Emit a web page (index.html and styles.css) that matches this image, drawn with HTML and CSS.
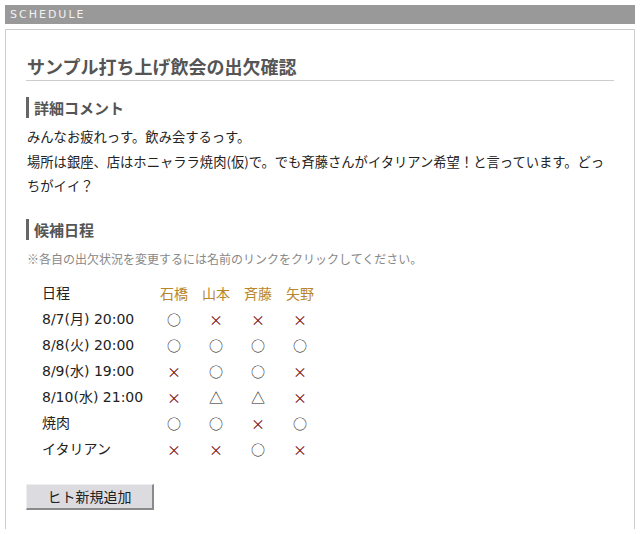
FILE: index.html
```html
<!DOCTYPE html>
<html lang="ja">
<head>
<meta charset="utf-8">
<title>SCHEDULE</title>
<link rel="stylesheet" href="styles.css">
</head>
<body>
<div class="header">SCHEDULE</div>
<div class="box">
  <h1 class="title">サンプル打ち上げ飲会の出欠確認</h1>
  <h2 class="sub">詳細コメント</h2>
  <p class="comment">みんなお疲れっす。飲み会するっす。<br>場所は銀座、店はホニャララ焼肉(仮)で。でも斉藤さんがイタリアン希望！と言っています。どっちがイイ？</p>
  <h2 class="sub sub2">候補日程</h2>
  <p class="note">※各自の出欠状況を変更するには名前のリンクをクリックしてください。</p>
  <table class="sched">
    <tr><th class="lbl">日程</th><th>石橋</th><th>山本</th><th>斉藤</th><th>矢野</th></tr>
    <tr><td class="lbl">8/7(月) 20:00</td><td class="o">○</td><td class="x">×</td><td class="x">×</td><td class="x">×</td></tr>
    <tr><td class="lbl">8/8(火) 20:00</td><td class="o">○</td><td class="o">○</td><td class="o">○</td><td class="o">○</td></tr>
    <tr><td class="lbl">8/9(水) 19:00</td><td class="x">×</td><td class="o">○</td><td class="o">○</td><td class="x">×</td></tr>
    <tr><td class="lbl">8/10(水) 21:00</td><td class="x">×</td><td class="o">△</td><td class="o">△</td><td class="x">×</td></tr>
    <tr><td class="lbl">焼肉</td><td class="o">○</td><td class="o">○</td><td class="x">×</td><td class="o">○</td></tr>
    <tr><td class="lbl">イタリアン</td><td class="x">×</td><td class="x">×</td><td class="o">○</td><td class="x">×</td></tr>
  </table>
  <button class="add" type="button">ヒト新規追加</button>
</div>
</body>
</html>
```

FILE: styles.css
```css
html, body {
  margin: 0;
  background: #fff;
}
body {
  padding: 5px 6px 0 5px;
  font-family: "Noto Sans CJK JP", "Noto Sans", sans-serif;
  color: #222;
}
.header {
  height: 19px;
  line-height: 19px;
  background: #999;
  color: #f2f2f2;
  font-family: "DejaVu Sans", sans-serif;
  font-size: 11px;
  letter-spacing: 2px;
  padding-left: 5px;
}
.box {
  margin-top: 5px;
  border: 1px solid #ccc;
  border-bottom: none;
  padding: 24px 20px 30px 20px;
  height: 500px;
  box-sizing: border-box;
}
.title {
  margin: 0;
  font-size: 18px;
  line-height: 24px;
  font-weight: bold;
  color: #555;
  padding: 0 0 2px 1px;
  border-bottom: 1px solid #ccc;
}
.sub {
  margin: 16px 0 0 0;
  font-size: 15px;
  line-height: 21px;
  font-weight: bold;
  color: #555;
  border-left: 3px solid #666;
  padding-left: 5px;
}
.sub2 {
  margin-top: 20px;
}
.comment {
  margin: 7px 0 0 1px;
  font-size: 13.3px;
  line-height: 24.5px;
  color: #222;
}
.note {
  margin: 10px 0 0 1px;
  font-size: 12px;
  line-height: 18px;
  color: #888;
}
.sched {
  margin: 12px 0 0 16px;
  border-collapse: collapse;
  font-size: 14px;
}
.sched th, .sched td {
  padding: 0;
  height: 26px;
  line-height: 26px;
  width: 42px;
  text-align: center;
  font-weight: normal;
}
.sched th {
  color: #b8862b;
}
.sched .lbl {
  width: 111px;
  text-align: left;
  color: #222;
  font-family: "DejaVu Sans", "Noto Sans CJK JP", sans-serif;
  font-size: 14px;
}
.sched .o {
  color: #222;
}
.sched .x {
  color: #7a1010;
}
.add {
  display: block;
  margin-top: 22px;
  width: 128px;
  height: 26px;
  padding: 0;
  background: #dcdce0;
  border-top: 1px solid #eeeef0;
  border-left: 1px solid #eeeef0;
  border-right: 2px solid #8a8a8a;
  border-bottom: 2px solid #8a8a8a;
  font-family: "Noto Sans CJK JP", sans-serif;
  font-size: 14px;
  color: #222;
  line-height: 22px;
}
```
